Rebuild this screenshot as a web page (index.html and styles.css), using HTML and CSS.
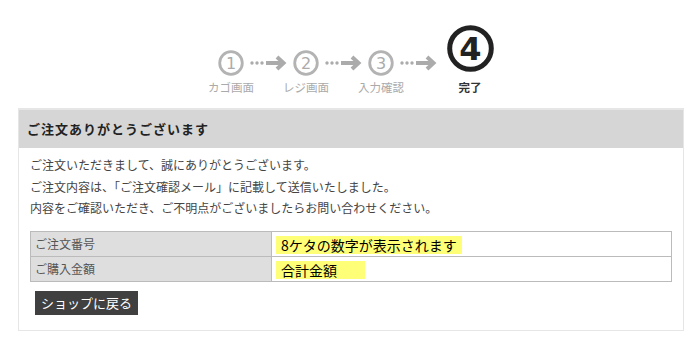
FILE: index.html
```html
<!DOCTYPE html>
<html lang="ja">
<head>
<meta charset="utf-8">
<title>ご注文ありがとうございます</title>
<link rel="stylesheet" href="styles.css">
</head>
<body>
<div class="steps">
  <div class="step">
    <div class="icon"><svg class="num" width="26" height="26" viewBox="0 0 26 26"><circle cx="13" cy="13" r="11.3" fill="none" stroke="#b3b3b3" stroke-width="2.8"/><text x="13" y="18.6" text-anchor="middle" class="numtxt">1</text></svg></div>
    <div class="label">カゴ画面</div>
  </div>
  <div class="conn"><svg width="37" height="16" viewBox="0 0 37 16"><circle cx="2" cy="8" r="1.7" fill="#ababab"/><circle cx="7" cy="8" r="1.7" fill="#ababab"/><circle cx="12" cy="8" r="1.7" fill="#ababab"/><path d="M16 8 H33" stroke="#ababab" stroke-width="4"/><path d="M27 2 L33.5 8 L27 14" fill="none" stroke="#ababab" stroke-width="4" stroke-linejoin="miter"/></svg></div>
  <div class="step">
    <div class="icon"><svg class="num" width="26" height="26" viewBox="0 0 26 26"><circle cx="13" cy="13" r="11.3" fill="none" stroke="#b3b3b3" stroke-width="2.8"/><text x="13" y="18.6" text-anchor="middle" class="numtxt">2</text></svg></div>
    <div class="label">レジ画面</div>
  </div>
  <div class="conn"><svg width="37" height="16" viewBox="0 0 37 16"><circle cx="2" cy="8" r="1.7" fill="#ababab"/><circle cx="7" cy="8" r="1.7" fill="#ababab"/><circle cx="12" cy="8" r="1.7" fill="#ababab"/><path d="M16 8 H33" stroke="#ababab" stroke-width="4"/><path d="M27 2 L33.5 8 L27 14" fill="none" stroke="#ababab" stroke-width="4" stroke-linejoin="miter"/></svg></div>
  <div class="step">
    <div class="icon"><svg class="num" width="26" height="26" viewBox="0 0 26 26"><circle cx="13" cy="13" r="11.3" fill="none" stroke="#b3b3b3" stroke-width="2.8"/><text x="13" y="18.6" text-anchor="middle" class="numtxt">3</text></svg></div>
    <div class="label">入力確認</div>
  </div>
  <div class="conn"><svg width="37" height="16" viewBox="0 0 37 16"><circle cx="2" cy="8" r="1.7" fill="#ababab"/><circle cx="7" cy="8" r="1.7" fill="#ababab"/><circle cx="12" cy="8" r="1.7" fill="#ababab"/><path d="M16 8 H33" stroke="#ababab" stroke-width="4"/><path d="M27 2 L33.5 8 L27 14" fill="none" stroke="#ababab" stroke-width="4" stroke-linejoin="miter"/></svg></div>
  <div class="step step-last">
    <div class="icon"><svg class="num-big" width="47" height="47" viewBox="0 0 47 47"><circle cx="23.5" cy="23.5" r="20.8" fill="none" stroke="#222" stroke-width="5"/><text x="23.5" y="34.5" text-anchor="middle" class="bigtxt">4</text></svg></div>
    <div class="label label-cur">完了</div>
  </div>
</div>

<div class="card">
  <div class="card-head">ご注文ありがとうございます</div>
  <div class="card-body">
    <p class="msg">ご注文いただきまして、誠にありがとうございます。<br>ご注文内容は、「ご注文確認メール」に記載して送信いたしました。<br>内容をご確認いただき、ご不明点がございましたらお問い合わせください。</p>
    <table class="info">
      <tr><th>ご注文番号</th><td><span class="hl">8ケタの数字が表示されます</span></td></tr>
      <tr><th>ご購入金額</th><td><span class="hl hl-wide">合計金額</span></td></tr>
    </table>
    <a class="btn" href="#">ショップに戻る</a>
  </div>
</div>
</body>
</html>
```

FILE: styles.css
```css
* { box-sizing: border-box; }
body {
  margin: 0;
  background: #fff;
  font-family: "Noto Sans CJK JP", "Noto Sans", sans-serif;
  color: #333;
}
.steps {
  display: flex;
  justify-content: center;
  padding: 26px 0 0 15px;
  height: 108px;
}
.step {
  width: 48px;
  display: flex;
  flex-direction: column;
  align-items: center;
}
.step-last { width: 76px; }
.icon {
  height: 49px;
  display: flex;
  align-items: flex-end;
  justify-content: center;
}
.num { display: block; margin-bottom: -1px; }
.num-big { display: block; margin-bottom: 3px; }
.numtxt {
  font-family: "DejaVu Sans", sans-serif;
  font-size: 16px;
  fill: #ababab;
}
.bigtxt {
  font-family: "DejaVu Sans", sans-serif;
  font-weight: bold;
  font-size: 32px;
  fill: #222;
}
.label {
  margin-top: 5px;
  font-size: 11.5px;
  line-height: 14px;
  color: #aaa;
  white-space: nowrap;
}
.label-cur { color: #333; font-weight: bold; }
.conn {
  width: 27px;
  height: 49px;
  display: flex;
  align-items: flex-end;
  justify-content: center;
  padding-bottom: 4px;
}
.conn svg { flex: none; display: block; margin: 0 -5px; }

.card {
  margin-left: 18px;
  width: 666px;
  border: 1px solid #e6e6e6;
  border-top-width: 2px;
}
.card-head {
  background: #d6d6d6;
  height: 38px;
  line-height: 37px;
  padding-left: 8px;
  font-size: 13px;
  font-weight: bold;
  letter-spacing: 1px;
  color: #222;
}
.card-body {
  padding: 6px 11px 15px 11px;
}
.msg {
  margin: 0 0 12px 0;
  font-size: 12px;
  line-height: 21.5px;
  color: #444;
}
.info {
  width: 100%;
  border-collapse: collapse;
  border: 1px solid #aaa;
}
.info th, .info td {
  border: 1px solid #bbb;
  height: 24px;
  padding: 0 4px;
  vertical-align: middle;
}
.info th {
  width: 241px;
  background: #dedede;
  text-align: left;
  font-weight: normal;
  font-size: 12px;
  color: #555;
}
.info td { background: #fff; }
.hl {
  display: inline-block;
  background: #ffff77;
  color: #000;
  font-size: 14px;
  line-height: 18px;
  padding: 0 5px;
}
.hl-wide { padding-right: 28px; }
.btn {
  display: inline-block;
  margin: 9px 0 0 5px;
  background: #404040;
  color: #fff;
  text-decoration: none;
  font-size: 13px;
  line-height: 24px;
  height: 24px;
  padding: 0 6px;
}
```
